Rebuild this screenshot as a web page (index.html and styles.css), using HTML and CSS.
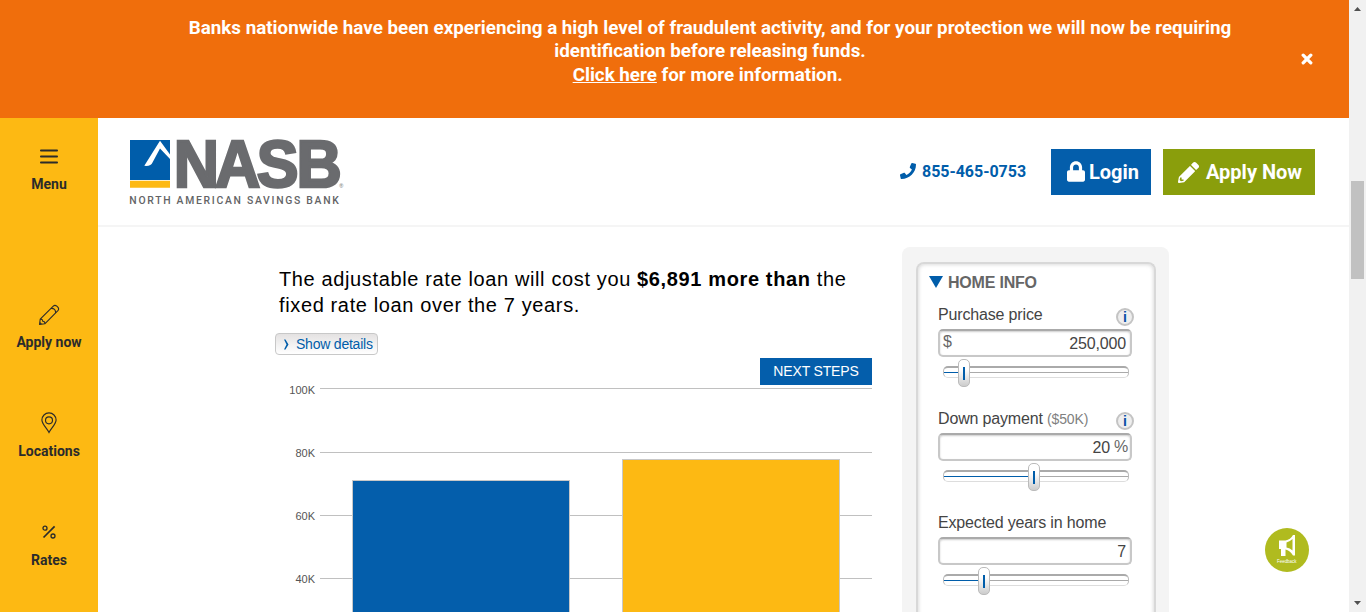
FILE: index.html
```html
<!DOCTYPE html>
<html lang="en">
<head>
<meta charset="utf-8">
<title>NASB - Fixed or adjustable rate calculator</title>
<link rel="stylesheet" href="styles.css">
</head>
<body>
<div class="window">
  <div class="page">
    <div class="alert">
      <p class="alert-text">Banks nationwide have been experiencing a high level of fraudulent activity, and for your protection we will now be requiring<br>identification before releasing funds.<br><a href="#">Click here</a> for more information.&nbsp;</p>
      <svg class="alert-close" viewBox="0 0 12 12" width="12" height="12"><path d="M2.2 2.2 9.8 9.8M9.8 2.2 2.2 9.8" stroke="#fff" stroke-width="3.3" stroke-linecap="round"/></svg>
    </div>
    <div class="shell">
      <nav class="side">
        <a class="side-item item-menu"><svg width="18" height="20" viewBox="0 0 18 20"><path d="M.9 3.500h16.200M.9 9.500h16.200M.9 15.500h16.200" stroke="#2b2b2b" stroke-width="1.8" stroke-linecap="round"/></svg><span>Menu</span></a>
        <a class="side-item item-apply"><svg width="22" height="22" viewBox="0 0 22 22" fill="none" stroke="#2b2b2b" stroke-width="1.1" stroke-linejoin="round"><path d="M1.500 20.500 2.200 15.200 15.300 2.100Q16.900.6 18.800 2.200L19.800 3.200Q21.400 5 19.900 6.700L6.800 19.800ZM2.200 15.200Q4.800 14.900 4.700 17.300 7 17.100 6.800 19.800M13 4.400Q17.700 4.200 17.600 9M1.500 20.500 3.500 20.200 1.800 18.500Z"/></svg><span>Apply now</span></a>
        <a class="side-item item-locations"><svg width="16" height="22" viewBox="0 0 16 22" fill="none" stroke="#2b2b2b" stroke-width="1.15"><path d="M8 20.500C6 16.500.9 12 .9 8A7.100 7.100 0 0 1 15.100 8C15.100 12 10 16.500 8 20.500Z"/><circle cx="8" cy="8.300" r="3.500"/></svg><span>Locations</span></a>
        <a class="side-item item-rates"><svg width="14" height="14" viewBox="0 0 14 14" fill="none" stroke="#2b2b2b"><path d="M1.500 12.500 12.600 1.300" stroke-width="1.700"/><circle cx="3" cy="3.200" r="2" stroke-width="1.300"/><circle cx="11" cy="11" r="2" stroke-width="1.300"/></svg><span>Rates</span></a>
      </nav>
      <main class="main">
        <header class="header">
          <svg class="logo" width="220" height="76" viewBox="0 0 220 76">
            <path d="M2 6h40v40H2z" fill="#005daa"/><path d="M2 46.700h40v7H2z" fill="#fdb913"/><path d="M32 6.800 42 20.500v4.500L32 14.500 24.500 28.500q-1.500 4-8.200 3.300z" fill="#fff"/>
            <text transform="scale(.95 1)" x="48.200 91.500 135.500 177.500" y="52.800" font-size="66" class="logo-name">NASB</text>
            <text x="211.300" y="53.600" font-size="5.500" class="logo-mark">®</text>
            <text x="1.300" y="70" font-size="10.400" textLength="209.500" class="logo-sub">NORTH AMERICAN SAVINGS BANK</text>
          </svg>
          <div class="actions">
            <a class="phone"><svg width="16" height="16" viewBox="0 0 512 512"><path fill="#005daa" d="m493 25-104-24c-11-3-23 3-28 14l-48 112c-4 10-1 22 7 29l61 50c-36 77-99 140-177 177l-50-61c-7-9-19-12-29-7L13 363c-10 5-16 16-14 27l24 104c3 11 13 18 25 18 256 0 464-207 464-464 0-11-8-21-19-23z"/></svg><span>855-465-0753</span></a>
            <a class="button login"><svg width="18" height="21" viewBox="0 0 448 512"><path fill="#fff" d="M400 224h-24v-72C376 68 308 0 224 0S72 68 72 152v72H48c-27 0-48 21-48 48v192c0 27 21 48 48 48h352c27 0 48-21 48-48V272c0-27-21-48-48-48zm-104 0H152v-72c0-40 32-72 72-72s72 32 72 72z"/></svg><span>Login</span></a>
            <a class="button apply"><svg width="21" height="21" viewBox="0 0 512 512"><path fill="#fff" d="m498 142-47 46c-5 5-12 5-17 0L324 78c-5-5-5-12 0-17l46-47c19-18 49-18 68 0l60 60c19 19 19 49 0 68zM284 101 22 363 0 484c-3 17 12 31 28 28l121-21 262-262c5-5 5-13 0-17L301 101c-5-5-13-5-17 0zM88 424h48v36l-64 12-32-32 12-64h36z"/></svg><span>Apply Now</span></a>
          </div>
        </header>
        <div class="calculator">
          <section class="result">
            <p class="summary">The adjustable rate loan will cost you <b>$6,891 more than</b> the<br>fixed rate loan over the 7 years.</p>
            <button class="details"><svg width="6" height="11" viewBox="0 0 6 11"><path d="M1 .5h1.500L5.500 5.500 2.500 10.500H1L3.500 5.500z" fill="#005daa"/></svg><span>Show details</span></button>
            <div class="next-row"><a class="next">NEXT STEPS</a></div>
            <div class="chart">
              <div class="tick"><span>100K</span><i></i></div>
              <div class="tick"><span>80K</span><i></i></div>
              <div class="tick"><span>60K</span><i></i></div>
              <div class="tick"><span>40K</span><i></i></div>
              <div class="bar fixed"></div>
              <div class="bar adjustable"></div>
            </div>
          </section>
          <aside class="panel">
            <div class="card">
              <h2><svg width="14" height="12" viewBox="0 0 14 12"><path d="M0 0h14L7 12z" fill="#005daa"/></svg><span>HOME INFO</span></h2>
              <div class="field"><div class="label"><span>Purchase price</span><b class="info">i</b></div>
                <div class="input"><span class="unit dollar">$</span><span class="value">250,000</span></div>
                <div class="slider"><div class="fill" style="width:20px"></div><div class="knob" style="left:14px"></div></div></div>
              <div class="field"><div class="label"><span>Down payment <small>($50K)</small></span><b class="info">i</b></div>
                <div class="input percent"><span class="value">20</span><span class="unit">%</span></div>
                <div class="slider"><div class="fill" style="width:90px"></div><div class="knob" style="left:84px"></div></div></div>
              <div class="field"><div class="label"><span>Expected years in home</span></div>
                <div class="input"><span class="value">7</span></div>
                <div class="slider"><div class="fill" style="width:40px"></div><div class="knob" style="left:34px"></div></div></div>
            </div>
          </aside>
        </div>
      </main>
    </div>
    <div class="feedback"><svg width="44" height="44" viewBox="0 0 44 44"><circle cx="22" cy="22" r="22" fill="#b0bb1f"/><path fill="#fff" fill-rule="evenodd" d="M14 12.500h6.500q5-1 7.500-5.500h2v20.500h-2q-3-5-7.500-6v6.500h-4.500v-7h-2zM21.500 14.500v5q3.500.5 6 3V11q-2.500 2.500-6 3.500z"/><text x="12" y="34.500" font-size="5.300" textLength="19.500" lengthAdjust="spacingAndGlyphs" class="feedback-text">Feedback</text></svg></div>
  </div>
  <div class="scrollbar"><svg width="7" height="4" viewBox="0 0 7 4"><path d="M0 4 3.500 0 7 4z" fill="#505050"/></svg><div class="thumb"></div><svg class="down" width="7" height="4" viewBox="0 0 7 4"><path d="M0 0h7L3.500 4z" fill="#505050"/></svg></div>
</div>
</body>
</html>
```
FILE: styles.css
```css
* { box-sizing: border-box; }
body { margin: 0; background: #fff; font-family: Roboto, sans-serif; }
svg { display: block; flex: none; }
p, h2 { margin: 0; }
.window { display: flex; width: 1366px; height: 612px; overflow: hidden; }
.page { position: relative; width: 1349px; height: 612px; overflow: hidden; }

.alert { display: flex; align-items: center; height: 118px; background: #f06e0c; color: #fff; }
.alert-text { width: 1300px; margin: -14px 0 0; padding-left: 120px; text-align: center; font-size: 18.8px; line-height: 23.5px; font-weight: 700; white-space: nowrap; }
.alert-text a { color: inherit; text-decoration: underline; }
.alert-close { margin-left: 1px; }

.shell { display: flex; height: 494px; }
.side { width: 98px; flex: none; background: #fdb913; }
.side-item { display: flex; flex-direction: column; align-items: center; color: #2b2b2b; font-size: 14px; font-weight: 700; line-height: 18px; }
.item-menu { padding-top: 29px; gap: 8px; }
.item-apply { margin-top: 111px; gap: 7px; }
.item-locations { margin-top: 61px; gap: 8px; }
.item-rates { margin-top: 65px; gap: 12px; }

.main { flex: 1; min-width: 0; }
.header { display: flex; justify-content: space-between; height: 109px; padding: 16px 34px 0 30px; border-bottom: 2px solid #f5f5f5; }
.logo { overflow: visible; }
.logo-name { font-family: "Liberation Sans", Arial, sans-serif; font-weight: 700; fill: #6a6b6e; stroke: #6a6b6e; stroke-width: 2.6px; }
.logo-mark { font-family: "Liberation Sans", sans-serif; fill: #6a6b6e; }
.logo-sub { font-family: Roboto, sans-serif; font-weight: 500; fill: #636466; }
.actions { display: flex; height: 46px; margin-top: 15px; align-items: center; }
.phone { display: flex; align-items: center; gap: 6px; margin: -2px 25px 0 0; color: #005daa; font-size: 16px; font-weight: 700; letter-spacing: -.03px; }
.phone span { width: 104px; white-space: nowrap; }
.button { display: flex; align-items: center; height: 46px; color: #fff; font-size: 20px; font-weight: 700; white-space: nowrap; }
.login { width: 100px; margin-right: 12px; padding-left: 16px; gap: 4px; background: #045eab; }
.login svg { margin-top: -1px; }
.apply { width: 152px; padding-left: 15px; gap: 7px; background: #8a9e0c; }

.calculator { display: flex; font-family: "Liberation Sans", Arial, sans-serif; }
.result { width: 597px; margin: 0 30px 0 177px; padding-top: 39px; }
.summary { padding-left: 4px; font-size: 20px; line-height: 26px; letter-spacing: .63px; color: #000; white-space: nowrap; }
.details { display: flex; align-items: center; gap: 7px; width: 103px; height: 22px; margin-top: 15px; padding: 0 0 0 7px; border: 1px solid #c8c8c8; border-radius: 4px; background: linear-gradient(#e4e2e2, #fff); color: #005daa; font: 14px "Liberation Sans", Arial, sans-serif; letter-spacing: -.22px; white-space: nowrap; }
.next-row { display: flex; justify-content: flex-end; margin-top: 3px; }
.next { width: 112px; height: 27px; background: #045eab; color: #fff; font-size: 14px; line-height: 26px; letter-spacing: -.15px; text-align: center; }
.chart { position: relative; height: 224px; margin-top: 3px; }
.tick { display: flex; gap: 5px; height: 63px; color: #555; font-size: 11px; line-height: 13px; }
.tick:first-child { height: 64px; }
.tick span { width: 40px; margin-top: -5px; text-align: right; }
.tick:first-child span { margin-top: -4px; }
.tick i { flex: 1; height: 1px; background: #c0c0c0; }
.bar { position: absolute; bottom: 0; width: 218px; border: 1px solid #c8c8c8; border-bottom: 0; }
.fixed { left: 77px; height: 132px; background: #045eab; }
.adjustable { left: 347px; height: 153px; background: #fdb913; }

.panel { width: 267px; height: 385px; margin-top: 20px; padding: 15px 13px 0 14px; border-radius: 8px 8px 0 0; background: #f4f4f4; }
.card { height: 370px; padding: 12px 22px 0 20px; border: 2px solid #d8d8d8; border-bottom: 0; border-radius: 8px 8px 0 0; background: #fff; box-shadow: inset 0 0 4px #ccc; }
.card h2 { display: flex; align-items: flex-start; gap: 5px; height: 34px; margin-left: -9px; color: #666; font-size: 16px; line-height: 14px; letter-spacing: -.2px; white-space: nowrap; }
.field { height: 104px; color: #444; font-size: 16px; }
.label { display: flex; justify-content: space-between; height: 19px; line-height: 10px; white-space: nowrap; letter-spacing: -.16px; }
.label small { font-size: 14px; color: #808080; }
.info { width: 18px; height: 18px; margin: -2px -2px 0 0; border: 2px solid #c4c4c4; border-radius: 50%; background: #eee; color: #0b51a5; font-size: 14px; line-height: 14px; text-align: center; letter-spacing: 0; }
.input { display: flex; width: 194px; height: 28px; padding: 0 4px 0 3px; border: 2px solid #c8c8c8; border-top-color: #aaa; border-radius: 5px; box-shadow: inset 0 1px 2px #ccc; line-height: 25px; letter-spacing: -.15px; }
.value { margin-left: auto; }
.percent { padding-right: 2px; gap: 4px; }
.unit { color: #666; line-height: 22px; }
.percent .unit { line-height: 23px; }
.slider { position: relative; width: 186px; height: 12px; margin: 9px 0 0 5px; border: 1px solid #bbb; border-top: 2px solid #aaa; border-bottom-color: #ddd; border-radius: 5px; background: linear-gradient(#aaa, #aaa) 0 4px / 100% 1px no-repeat; }
.fill { height: 1px; margin-top: 4px; background: #005daa; }
.knob { position: absolute; top: -9px; width: 12px; height: 28px; border: 1px solid #bbb; border-radius: 5px; background: linear-gradient(#005daa, #005daa) 4px 7px / 2px 13px no-repeat, linear-gradient(#fff 35%, #ccc); }

.feedback { position: absolute; left: 1265px; top: 528px; }
.feedback-text { font-family: "Liberation Sans", sans-serif; fill: #fff; }
.scrollbar { display: flex; flex-direction: column; align-items: center; width: 17px; height: 612px; padding: 7px 0; background: #f1f1f1; }
.thumb { width: 13px; height: 98px; margin-top: 170px; background: #c1c1c1; }
.down { margin-top: auto; }
```
